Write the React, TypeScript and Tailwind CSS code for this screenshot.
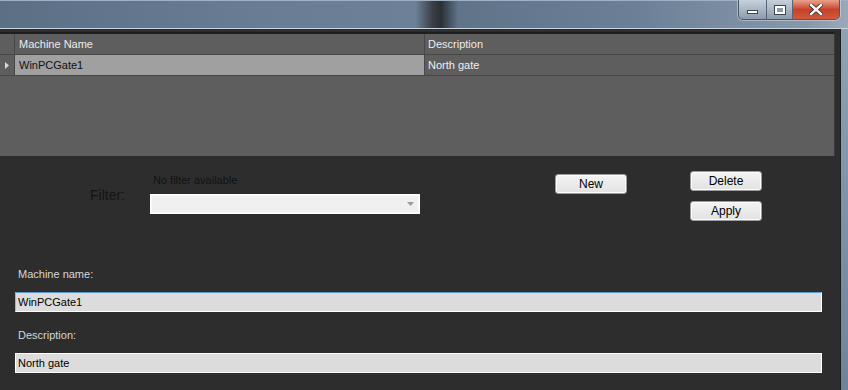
import React from 'react';

const font = { fontFamily: '"Liberation Sans", Arial, sans-serif' };

const Button = ({ label }: { label: string }) => (
  <button className="w-[72px] h-[20px] rounded-[3px] border border-[#9c9c9c] bg-gradient-to-b from-[#f4f4f4] to-[#e2e2e2] text-[12px] text-black leading-none shadow-[inset_0_0_0_1px_#fcfcfc]">
    {label}
  </button>
);

const TitleBar = () => (
  <div className="relative h-[29px] border-t border-[#9fb0c2] border-b border-b-[#c9d3de] bg-[linear-gradient(90deg,#5b6f85_0%,#687d94_30%,#6c8198_49%,#3a3f45_51%,#2c3035_52%,#5f7389_54%,#6b8097_75%,#8798ab_95%,#9aa9b9_100%)]">
    {/* window controls */}
    <div className="absolute right-[8px] top-[-1px] flex h-[20px] rounded-b-[5px] border border-t-0 border-[#4b5a6b] overflow-hidden shadow-[0_0_0_1px_rgba(255,255,255,0.35)]">
      <div className="w-[28px] h-full flex items-center justify-center bg-gradient-to-b from-[#c7d1dc] to-[#8c9bab] border-r border-[#56657a]">
        <div className="w-[11px] h-[4px] mt-[5px] bg-white border border-[#3c4552]" />
      </div>
      <div className="w-[26px] h-full flex items-center justify-center bg-gradient-to-b from-[#c7d1dc] to-[#8c9bab] border-r border-[#56657a]">
        <div className="w-[10px] h-[8px] border-2 border-white outline outline-1 outline-[#3c4552] bg-[#8c9bab]" />
      </div>
      <div className="w-[46px] h-full flex items-center justify-center bg-gradient-to-b from-[#e8a08c] via-[#c8422a] to-[#d0583c]">
        <svg width="14" height="11" viewBox="0 0 14 11">
          <path d="M2 1 L12 10 M12 1 L2 10" stroke="#3a2a26" strokeWidth="4" strokeLinecap="square" />
          <path d="M2 1 L12 10 M12 1 L2 10" stroke="#ffffff" strokeWidth="2.4" strokeLinecap="square" />
        </svg>
      </div>
    </div>
  </div>
);

const Grid = () => (
  <div className="h-[124px] mr-[5px] bg-[#5e5e5e] border-t-2 border-[#1f1f1f] border-r border-r-[#3a3a3a]">
    <div className="flex h-[21px] border-b border-[#474747] text-[11px] text-[#ececec]">
      <div className="w-[15px] border-r border-[#474747]" />
      <div className="w-[410px] border-r border-[#474747] flex items-center pl-[4px]">Machine Name</div>
      <div className="flex-1 flex items-center pl-[3px]">Description</div>
    </div>
    <div className="flex h-[21px] border-b border-[#474747] text-[11px]">
      <div className="w-[15px] border-r border-[#474747] flex items-center justify-center">
        <svg width="4" height="7" viewBox="0 0 4 7">
          <path d="M0 0 L4 3.5 L0 7 Z" fill="#d8d8d8" />
        </svg>
      </div>
      <div className="w-[410px] border-r border-[#474747] bg-[#a0a0a0] text-[#111] flex items-center pl-[4px]">WinPCGate1</div>
      <div className="flex-1 flex items-center pl-[3px] text-[#f0f0f0]">North gate</div>
    </div>
  </div>
);

const Form = () => (
  <div className="flex-1">
    <div className="flex items-start pt-[15px]">
      <div className="w-[150px] pl-[90px] pt-[14px] text-[14px] text-[#141414]">Filter:</div>
      <div className="w-[270px]">
        <div className="pl-[3px] pt-[2px] h-[16px] text-[11px] leading-[14px] text-[#121212]">No filter available</div>
        <div className="mt-[7px] h-[20px] border border-white bg-[#f0f0f0] flex items-center shadow-[inset_0_0_0_1px_#fafafa]">
          <div className="flex-1" />
          <svg width="7" height="4" viewBox="0 0 7 4" className="mr-[5px]">
            <path d="M0 0 L7 0 L3.5 4 Z" fill="#9a9a9a" />
          </svg>
        </div>
      </div>
      <div className="ml-[135px]">
        <Button label="New" />
      </div>
      <div className="ml-[63px] flex flex-col gap-[10px]">
        <Button label="Delete" />
        <Button label="Apply" />
      </div>
    </div>

    <div className="mt-[46px] pl-[18px] text-[11px] leading-[14px] text-[#d6d6d6]">Machine name:</div>
    <div className="mt-[11px] ml-[15px] w-[807px] h-[20px] bg-[#dcdcdc] border border-white border-t-[#5d9ad3] border-l-[#8fb8df] flex items-center pl-[2px] text-[11px] text-black">
      WinPCGate1
    </div>
    <div className="mt-[16px] pl-[18px] text-[11px] leading-[14px] text-[#d6d6d6]">Description:</div>
    <div className="mt-[11px] ml-[15px] w-[807px] h-[20px] bg-[#dcdcdc] border border-white flex items-center pl-[2px] text-[11px] text-black">
      North gate
    </div>
  </div>
);

export default function App() {
  return (
    <div className="w-[848px] h-[390px] overflow-hidden flex flex-col bg-[#2d2d2d]" style={font}>
      <TitleBar />
      <div className="flex flex-1">
        <div className="flex-1 flex flex-col bg-[#2d2d2d] pt-[3px]">
          <Grid />
          <Form />
        </div>
        <div className="w-[8px] bg-gradient-to-b from-[#8fa1b5] to-[#6f8399] border-l border-[#1e1e1e]" />
      </div>
    </div>
  );
}
